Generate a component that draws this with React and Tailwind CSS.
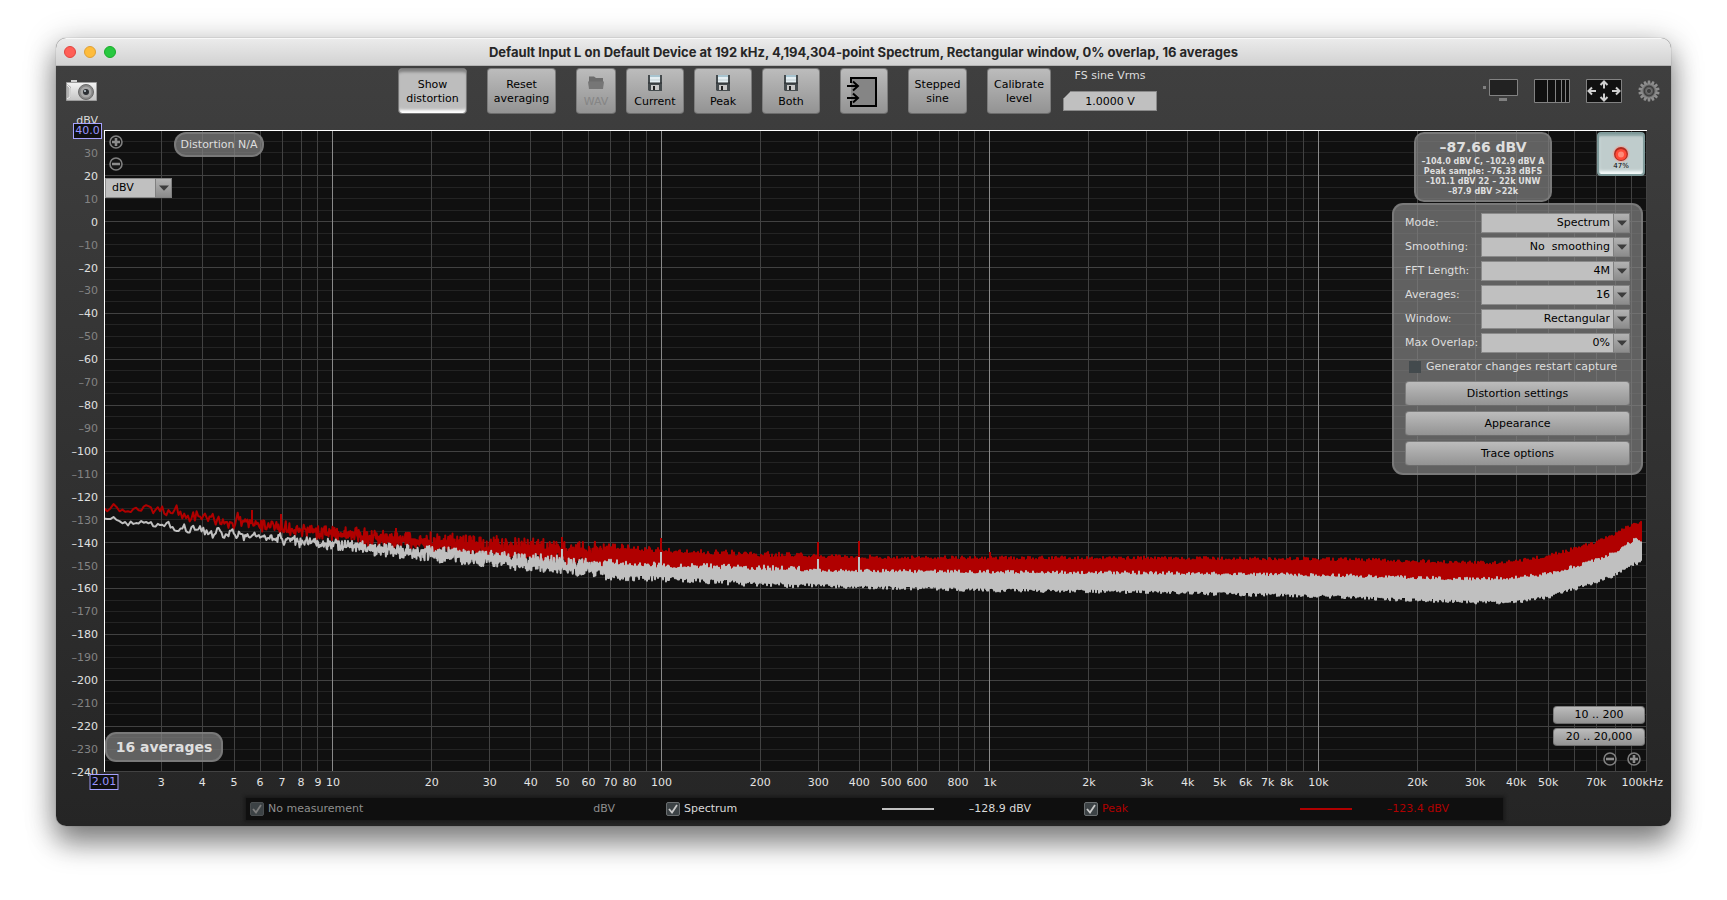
import React from "react";

const PLOT_W = 1543;
const PLOT_H = 642;
const F_MIN = 2.01;
const F_MAX = 100000;
const DECADES = Math.log10(F_MAX / F_MIN);

const xOf = (f) => (Math.log10(f / F_MIN) / DECADES) * PLOT_W;
const yOf = (db) => ((40 - db) / 280) * PLOT_H;

// Envelope rows: x, peak top, peak bottom, spectrum top, spectrum bottom
const ENVELOPE = [
  [0, 372, 382, 386, 390],
  [20, 373, 384, 388, 394],
  [55, 374, 386, 390, 398],
  [97, 381, 393, 397, 406],
  [160, 389, 402, 403, 412],
  [228, 397, 410, 410, 419],
  [327, 406, 421, 418, 429],
  [425, 412, 430, 426, 438],
  [495, 417, 435, 433, 445],
  [556, 422, 441, 437, 447],
  [655, 426, 446, 440, 452],
  [754, 428, 451, 442, 456],
  [885, 429, 451, 443, 459],
  [1045, 429, 451, 444, 461],
  [1213, 430, 453, 446, 465],
  [1312, 432, 455, 449, 469],
  [1371, 434, 457, 450, 471],
  [1411, 433, 456, 449, 471],
  [1443, 427, 451, 445, 466],
  [1470, 420, 443, 438, 458],
  [1495, 412, 436, 430, 450],
  [1515, 403, 426, 421, 442],
  [1530, 394, 417, 411, 433],
  [1537, 393, 416, 411, 432],
];

function lerpEnvelope(x) {
  let i = 1;
  while (i < ENVELOPE.length - 1 && ENVELOPE[i][0] < x) i += 1;
  const a = ENVELOPE[i - 1];
  const b = ENVELOPE[i];
  const t = Math.min(1, Math.max(0, (x - a[0]) / (b[0] - a[0])));
  return a.map((v, k) => v + (b[k] - v) * t);
}

function makeRandom(seed) {
  let s = seed;
  return () => {
    s = (s * 1664525 + 1013904223) % 4294967296;
    return s / 4294967296;
  };
}

function makeTrace(seed, topIndex, spikes) {
  const rnd = makeRandom(seed);
  const pts = [];
  let x = 0;
  let smooth = 0;
  while (x <= 500) {
    const e = lerpEnvelope(x);
    const top = e[topIndex];
    const bottom = e[topIndex + 1];
    const f = F_MIN * Math.pow(10, (x / PLOT_W) * DECADES);
    const n = rnd() + rnd() - 1;
    const memory = Math.max(0, 0.4 - x / 600);
    smooth = smooth * memory + n;
    const gain = 0.65 + (x / 500) * 0.2;
    pts.push([x, (top + bottom) / 2 + smooth * (bottom - top) * gain]);
    x += Math.max(0.25, 6.5 / f);
  }
  for (x = Math.ceil(x); x <= 1537; x += 1) {
    const e = lerpEnvelope(x);
    const rough = x < 700 ? 6 : 4;
    pts.push([x, e[topIndex] + 1.5 - Math.pow(rnd(), 2) * rough]);
    pts.push([x, e[topIndex + 1] - 1.5 + Math.pow(rnd(), 2) * rough]);
  }
  const line = "M" + pts.map((p) => p[0].toFixed(1) + " " + p[1].toFixed(1)).join("L");
  const peaks = spikes
    .map(([sx, sy]) => {
      const e = lerpEnvelope(sx);
      return "M" + sx + " " + sy + "V" + ((e[topIndex] + e[topIndex + 1]) / 2).toFixed(1);
    })
    .join("");
  return line + peaks;
}

const PEAK_PATH = makeTrace(7, 1, [
  [148, 380], [177, 384], [292, 398], [458, 407], [557, 408], [714, 412], [755, 411], [886, 422],
]);
const SPECTRUM_PATH = makeTrace(41, 3, [[458, 419], [557, 422], [714, 429], [755, 427]]);

const MAJOR_FREQS = [10, 100, 1000, 10000];
const MINOR_FREQS = [];
for (let d = 1; d <= 10000; d *= 10) {
  for (let m = 2; m <= 9; m += 1) if (d * m > 2.1) MINOR_FREQS.push(d * m);
}
const LEVEL_LINES = [];
for (let db = 35; db >= -240; db -= 5) LEVEL_LINES.push(db);
const LEVEL_LABELS = [];
for (let db = 30; db >= -240; db -= 10) LEVEL_LABELS.push(db);
const FREQ_LABELS = [
  3, 4, 5, 6, 7, 8, 9, 10, 20, 30, 40, 50, 60, 70, 80, 100, 200, 300, 400, 500, 600, 800, 1000,
  2000, 3000, 4000, 5000, 6000, 7000, 8000, 10000, 20000, 30000, 40000, 50000, 70000,
];

const raised =
  "rounded border border-[#7c7c7c] border-b-[#6c6c6c] bg-linear-to-b from-[#bcbcbc] to-[#939393] text-black";

function ToolButton({ className, children, ...rest }) {
  return (
    <button
      type="button"
      className={`flex h-[46px] flex-col items-center justify-center pt-[2px] leading-[14px] ${raised} ${className}`}
      {...rest}
    >
      {children}
    </button>
  );
}

function Floppy() {
  return (
    <svg className="mb-1 h-4 w-4" viewBox="0 0 16 16" aria-hidden="true">
      <path d="M1 0h14v16H2l-1-1z" fill="#454b4e" />
      <path d="M3 0h10v8H3z" fill="#e4eef2" />
      <path d="M3 0h10v2H3z" fill="#a8c4d0" />
      <path d="M3 5h10" stroke="#c2ced2" />
      <path d="M4 10h8v5H4z" fill="#c8c8c8" />
      <path d="M6 11h2v4H6z" fill="#222" />
      <path d="M1 8h14" stroke="#2c3032" />
    </svg>
  );
}

function SelectBox({ id, value, label, className, align }) {
  return (
    <div className={`relative flex h-5 ${className}`}>
      <select
        id={id}
        aria-label={label}
        defaultValue={value}
        className={`h-5 w-full appearance-none border border-[#8a8a8a] bg-[#c0c0c0] pr-[19px] pl-[6px] leading-4 text-black ${align}`}
      >
        <option>{value}</option>
      </select>
      <span className="pointer-events-none absolute inset-y-0 right-0 flex w-[17px] items-center justify-center border border-[#808080] bg-linear-to-b from-[#b2b2b2] to-[#8c8c8c]">
        <svg className="h-[6px] w-[10px]" viewBox="0 0 10 6" aria-hidden="true">
          <path d="M0 0.5h10L5 5.8z" fill="#3c3c3c" />
        </svg>
      </span>
    </div>
  );
}

function ZoomButton({ plus, label }) {
  return (
    <button type="button" aria-label={label} className="h-4 w-4 rounded-full">
      <svg className="h-4 w-4" viewBox="0 0 16 16" aria-hidden="true">
        <circle cx="8" cy="8" r="6" fill="#151515" stroke="#808080" strokeWidth="1.6" />
        <path d={plus ? "M4 8h8M8 4v8" : "M4 8h8"} stroke="#8c8c8c" strokeWidth="2.6" />
      </svg>
    </button>
  );
}

function LegendCheck({ id, label, color, dim }) {
  return (
    <div className="flex w-[216px] items-center gap-1">
      <span className="relative flex h-[14px] w-[14px]">
        <input
          id={id}
          type="checkbox"
          defaultChecked
          disabled={dim}
          className="peer h-[14px] w-[14px] appearance-none rounded-xs border border-[#6a6e70] bg-[#3c4245] disabled:border-[#4a4e50]"
        />
        <svg
          className="pointer-events-none absolute inset-0 hidden h-[14px] w-[14px] peer-checked:block"
          viewBox="0 0 14 14"
          aria-hidden="true"
        >
          <path d="M3 7l3 3.5L11 3" fill="none" stroke={dim ? "#7c7c7c" : "#c8c8c8"} strokeWidth="1.8" />
        </svg>
      </span>
      <label htmlFor={id} className={color}>
        {label}
      </label>
    </div>
  );
}

const SETTINGS = [
  ["mode", "Mode:", "Spectrum"],
  ["smoothing", "Smoothing:", "No\u00a0 smoothing"],
  ["fft", "FFT Length:", "4M"],
  ["averages", "Averages:", "16"],
  ["window", "Window:", "Rectangular"],
  ["overlap", "Max Overlap:", "0%"],
];

const glass = "border-2 border-[#808080]/80 bg-[#858585]/70 text-[#dedede]";

function Gear() {
  const teeth = Array.from({ length: 14 }, (_, i) => i * (360 / 14));
  return (
    <svg className="h-[22px] w-[22px]" viewBox="0 0 22 22" aria-hidden="true">
      {teeth.map((a) => (
        <path key={a} d="M9.9 0.4h2.2l.5 3.6h-3.2z" fill="#8e8e8e" transform={`rotate(${a} 11 11)`} />
      ))}
      <circle cx="11" cy="11" r="7" fill="#6a6a6a" stroke="#8a8a8a" strokeWidth="1.2" />
      <circle cx="11" cy="11" r="4.8" fill="#5c5c5c" stroke="#3c3c3c" strokeWidth="1.2" />
      <circle cx="11" cy="11" r="2.6" fill="#3d3d3d" stroke="#7c7c7c" strokeWidth="0.8" />
    </svg>
  );
}

function Toolbar() {
  return (
    <div className="flex h-16 items-start justify-between pt-[2px] pr-[11px] pl-[10px]">
      <button type="button" aria-label="Capture image" className="mt-3 h-[21px] w-[31px]">
        <svg className="h-[21px] w-[31px]" viewBox="0 0 31 21" aria-hidden="true">
          <defs>
            <linearGradient id="cam" x1="0" y1="0" x2="0" y2="1">
              <stop offset="0" stopColor="#f4f4f4" />
              <stop offset="1" stopColor="#c4c4c4" />
            </linearGradient>
          </defs>
          <path d="M5 0h6v3H5z" fill="#d2d2d2" />
          <path d="M0.5 2.5h30v18h-30z" fill="url(#cam)" stroke="#9c9c9c" />
          <path d="M1 4l4 3v10l-4 3z" fill="#b2b2b2" />
          <path d="M1 5l3 3v9l-3 2" fill="none" stroke="#eee" />
          <circle cx="20" cy="12" r="7.5" fill="#888" stroke="#6b6b6b" />
          <circle cx="20" cy="12" r="5.5" fill="#a8a8a8" />
          <circle cx="20" cy="12" r="3" fill="#2c3034" />
          <circle cx="19" cy="11" r="1" fill="#c8d4dc" />
        </svg>
      </button>

      <div className="flex items-start">
        <button
          type="button"
          aria-pressed="true"
          className="h-[46px] w-[69px] rounded border border-[#767676] bg-[#bdbdbd] pt-[2px] leading-[14px] text-black shadow-[inset_0_3px_3px_#808080,inset_0_-3px_3px_#fff]"
        >
          Show
          <br />
          distortion
        </button>
        <ToolButton className="ml-5 w-[69px]">
          Reset
          <br />
          averaging
        </ToolButton>
        <ToolButton className="ml-5 w-10 !text-[#858585]" disabled>
          <svg className="mb-1 h-4 w-4" viewBox="0 0 16 16" aria-hidden="true">
            <path d="M1 1.5h5l2 1.5h7v5H1z" fill="#6c6c6c" />
            <path d="M0 6.5h16l-1 7.5H1z" fill="#767676" />
          </svg>
          WAV
        </ToolButton>
        <ToolButton className="ml-[10px] w-[58px]">
          <Floppy />
          Current
        </ToolButton>
        <ToolButton className="ml-[10px] w-[58px]">
          <Floppy />
          Peak
        </ToolButton>
        <ToolButton className="ml-[10px] w-[58px]">
          <Floppy />
          Both
        </ToolButton>
        <ToolButton className="ml-5 w-12" aria-label="Input settings">
          <svg className="-ml-1 h-[30px] w-[30px]" viewBox="0 0 30 30" aria-hidden="true">
            <path d="M4 1h25v28H4z" fill="#858585" />
            <path d="M4 6V1h25v28H4v-5" fill="none" stroke="#000" strokeWidth="2" />
            <path
              d="M0 9h11M0 21h11M6 4.500l5 4.500-5 4.500M6 16.500l5 4.500-5 4.500"
              fill="none"
              stroke="#000"
              strokeWidth="2"
            />
          </svg>
        </ToolButton>
        <ToolButton className="ml-5 w-[59px]">
          Stepped
          <br />
          sine
        </ToolButton>
        <ToolButton className="ml-5 w-16">
          Calibrate
          <br />
          level
        </ToolButton>
        <div className="ml-3 flex w-[94px] flex-col items-center gap-2 pt-px">
          <label htmlFor="vrms" className="leading-[14px] whitespace-nowrap text-[#dcdcdc]">
            FS sine Vrms
          </label>
          <input
            id="vrms"
            defaultValue="1.0000 V"
            className="h-5 w-full border border-[#8a8a8a] bg-[#c0c0c0] text-center text-black [clip-path:polygon(8px_0,100%_0,100%_100%,0_100%,0_8px)]"
          />
        </div>
      </div>

      <div className="mt-[11px] flex items-start gap-4 pl-6">
        <button type="button" aria-label="Display" className="h-6 w-9">
          <svg className="h-6 w-9" viewBox="0 0 36 24" aria-hidden="true">
            <path d="M7.500 0.500h28v16h-28z" fill="#222" stroke="#828282" />
            <path d="M1 7h3v3H1zM17 19h8v3h-8z" fill="#808080" />
          </svg>
        </button>
        <button type="button" aria-label="Frequency axis" className="h-6 w-9">
          <svg className="h-6 w-9" viewBox="0 0 36 24" aria-hidden="true">
            <path d="M0.500 0.500h35v23h-35z" fill="#101010" stroke="#828282" />
            <path d="M13.500 1v22M21.500 1v22M27.500 1v22M31.500 1v22" stroke="#828282" />
          </svg>
        </button>
        <button type="button" aria-label="Fit graph" className="h-6 w-9">
          <svg className="h-6 w-9" viewBox="0 0 36 24" aria-hidden="true">
            <path d="M0.500 0.500h35v23h-35z" fill="#101010" stroke="#828282" />
            <path
              d="M18 9.500V3M14.500 6L18 2.500 21.500 6M18 14.500V21M14.500 18l3.500 3.500 3.500-3.500M10 12H3M6 8.500L2.500 12 6 15.500M26 12h7M30 8.500l3.500 3.500-3.500 3.500"
              fill="none"
              stroke="#d0d0d0"
              strokeWidth="2"
            />
          </svg>
        </button>
        <button type="button" aria-label="Settings" className="h-6 w-[22px]">
          <Gear />
        </button>
      </div>
    </div>
  );
}

function Plot() {
  return (
    <div className="relative min-w-0 flex-1">
      <div className="relative h-[642px] bg-[#101010]">
        <svg
          className="block h-full w-full"
          viewBox={`0 0 ${PLOT_W} ${PLOT_H}`}
          preserveAspectRatio="none"
          role="img"
          aria-label="Spectrum and peak level against frequency"
        >
          <g shapeRendering="crispEdges" strokeWidth="1">
            {LEVEL_LINES.filter((db) => db % 20 !== 0).map((db) => (
              <line key={db} x1="0" x2={PLOT_W} y1={yOf(db)} y2={yOf(db)} stroke="#242424" />
            ))}
            {MINOR_FREQS.map((f) => (
              <line key={f} x1={xOf(f)} x2={xOf(f)} y1="0" y2={PLOT_H} stroke="#424242" />
            ))}
            {LEVEL_LINES.filter((db) => db % 20 === 0).map((db) => (
              <line key={db} x1="0" x2={PLOT_W} y1={yOf(db)} y2={yOf(db)} stroke="#424242" />
            ))}
            {MAJOR_FREQS.map((f) => (
              <line key={f} x1={xOf(f)} x2={xOf(f)} y1="0" y2={PLOT_H} stroke="#8a8a8a" />
            ))}
            <line x1={PLOT_W - 1} x2={PLOT_W - 1} y1="0" y2={PLOT_H} stroke="#424242" />
            <line x1="0" x2={PLOT_W} y1={PLOT_H - 1} y2={PLOT_H - 1} stroke="#424242" />
          </g>
          <path d={PEAK_PATH} fill="none" stroke="#b00000" strokeWidth="2" strokeLinejoin="round" />
          <path d={SPECTRUM_PATH} fill="none" stroke="#c0c0c0" strokeWidth="2" strokeLinejoin="round" />
          <path d={`M0.500 ${PLOT_H}V0.500H${PLOT_W}`} fill="none" stroke="#fff" shapeRendering="crispEdges" />
        </svg>

        <div className="absolute top-1 left-px flex flex-col gap-[6px]">
          <div className="flex flex-col gap-[6px] pl-[3px]">
            <ZoomButton plus label="Zoom in level axis" />
            <ZoomButton label="Zoom out level axis" />
          </div>
          <SelectBox label="Level units" value="dBV" className="w-[67px]" align="" />
        </div>

        <div className={`absolute top-[2px] left-[70px] flex h-[25px] w-[90px] items-center justify-center rounded-xl whitespace-nowrap ${glass}`}>
          Distortion N/A
        </div>

        <div className={`absolute bottom-[10px] left-px flex h-[30px] w-[118px] items-center justify-center rounded-[11px] text-[14px] font-bold ${glass}`}>
          16 averages
        </div>

        <div className={`absolute top-[2px] right-[95px] flex h-[70px] w-[138px] flex-col items-center rounded-[10px] pt-1 font-bold whitespace-nowrap ${glass}`}>
          <span className="text-[14px] leading-[18px]">–87.66 dBV</span>
          <div className="pt-px text-center text-[8px] leading-[10px]">
            <p>–104.0 dBV C, –102.9 dBV A</p>
            <p>Peak sample: –76.33 dBFS</p>
            <p>–101.1 dBV 22 – 22k UNW</p>
            <p>–87.9 dBV &gt;22k</p>
          </div>
        </div>

        <button
          type="button"
          aria-label="Stop recording"
          className="absolute top-[2px] right-[2px] flex h-11 w-12 flex-col items-center justify-end rounded border-2 border-[#7f9a9a] bg-[#bfcccc] pb-1 text-black shadow-[inset_0_2px_2px_#8ba3a3,inset_0_-3px_3px_#f4fafa]"
        >
          <svg className="h-[18px] w-[18px]" viewBox="0 0 18 18" aria-hidden="true">
            <circle cx="9" cy="9" r="8.500" fill="#e8a8a0" opacity="0.6" />
            <circle cx="9" cy="9" r="7" fill="#b02c20" />
            <circle cx="9" cy="9.500" r="5.600" fill="#ff4a38" />
            <circle cx="9" cy="9.500" r="3" fill="#ff8a78" />
          </svg>
          <span className="text-[7px] leading-[7px]">47%</span>
        </button>

        <form
          className={`absolute top-[73px] right-1 flex w-[251px] flex-col rounded-[11px] px-[11px] pt-2 pb-[7px] ${glass}`}
          onSubmit={(e) => e.preventDefault()}
        >
          <div className="flex flex-col gap-1">
            {SETTINGS.map(([id, label, value]) => (
              <div key={id} className="flex items-center justify-between">
                <label htmlFor={id} className="whitespace-nowrap">
                  {label}
                </label>
                <SelectBox id={id} value={value} className="w-[149px]" align="[text-align-last:right]" />
              </div>
            ))}
          </div>
          <div className="mt-[6px] flex h-4 items-center gap-[5px] pl-1">
            <input id="restart" type="checkbox" className="h-3 w-3 appearance-none bg-[#434a4d]" />
            <label htmlFor="restart" className="whitespace-nowrap">
              Generator changes restart capture
            </label>
          </div>
          <div className="mt-[6px] flex flex-col gap-[5px]">
            <button type="button" className={`h-[25px] ${raised}`}>
              Distortion settings
            </button>
            <button type="button" className={`h-[25px] ${raised}`}>
              Appearance
            </button>
            <button type="button" className={`h-[25px] ${raised}`}>
              Trace options
            </button>
          </div>
        </form>

        <div className="absolute right-[2px] bottom-[5px] flex w-[92px] flex-col gap-1">
          <button type="button" className={`h-[18px] leading-4 ${raised}`}>
            10 .. 200
          </button>
          <button type="button" className={`h-[18px] leading-4 ${raised}`}>
            20 .. 20,000
          </button>
          <div className="flex justify-end gap-2 pt-px pr-[3px]">
            <ZoomButton label="Zoom out frequency axis" />
            <ZoomButton plus label="Zoom in frequency axis" />
          </div>
        </div>
      </div>

      <div className="relative h-[26px] text-[#e4e4e4]">
        {FREQ_LABELS.map((f) => (
          <span
            key={f}
            className="absolute top-1 -translate-x-1/2 leading-[14px]"
            style={{ left: `${(xOf(f) / PLOT_W) * 100}%` }}
          >
            {f >= 1000 ? `${f / 1000}k` : f}
          </span>
        ))}
        <span className="absolute top-1 -right-4 leading-[14px]">100kHz</span>
        <span className="absolute top-[2px] left-0 flex h-4 w-[29px] -translate-x-1/2 items-center justify-center border border-[#a6a2ff] bg-[#101010] text-[#9a94ff]">
          2.01
        </span>
      </div>
    </div>
  );
}

function LevelAxis() {
  return (
    <div className="relative w-12 shrink-0">
      <span className="absolute -top-4 right-[6px] leading-[14px] text-[#dcdcdc]">dBV</span>
      <div className="relative -mt-2 flex h-[660px] flex-col items-end justify-between pr-[6px]">
        <span className="-mr-1 flex h-[18px] items-center">
          <span className="flex h-4 w-[29px] items-center justify-center border border-[#a6a2ff] bg-[#101010] text-[#9a94ff]">
            40.0
          </span>
        </span>
        {LEVEL_LABELS.map((db) => (
          <span
            key={db}
            className={`h-[18px] leading-[18px] ${db % 20 === 0 ? "text-[#e0e0e0]" : "text-[#838383]"}`}
          >
            {db < 0 ? `–${-db}` : db}
          </span>
        ))}
      </div>
    </div>
  );
}

function Legend() {
  return (
    <div className="mr-[168px] ml-[190px] grid h-[22px] grid-cols-3 bg-[#0f0f0f] shadow-[0_0_3px_2px_#1a1a1a]">
      <div className="flex items-center pl-1">
        <LegendCheck id="no-measurement" label="No measurement" color="text-[#8e8e8e]" dim />
        <span className="w-[149px] text-right text-[#8e8e8e]">dBV</span>
      </div>
      <div className="flex items-center pl-px">
        <LegendCheck id="spectrum" label="Spectrum" color="text-[#dadada]" />
        <span className="h-[2px] w-[52px] bg-[#c0c0c0]" />
        <span className="w-[97px] text-right text-[#dadada]">–128.9 dBV</span>
      </div>
      <div className="flex items-center">
        <LegendCheck id="peak" label="Peak" color="text-[#b00000]" />
        <span className="h-[2px] w-[52px] bg-[#b00000]" />
        <span className="w-[97px] text-right text-[#b00000]">–123.4 dBV</span>
      </div>
    </div>
  );
}

export default function App() {
  return (
    <div className="min-h-screen bg-white px-14 pt-[38px] pb-[74px] font-['DejaVu_Sans','Liberation_Sans',sans-serif] text-[11px] leading-4">
      <main className="flex flex-col overflow-hidden rounded-[10px] bg-linear-to-b from-[#404040] to-[#252525] shadow-[0_0_1px_#0008,0_18px_28px_#0006,0_4px_32px_#0004]">
        <header className="relative flex h-7 items-center justify-center border-t border-b border-t-[#f8f8f8] border-b-[#b4b4b4] bg-linear-to-b from-[#ebebeb] to-[#d2d2d2]">
          <div className="absolute left-2 flex gap-2">
            <button type="button" aria-label="Close" className="h-3 w-3 rounded-full border border-[#e0443e] bg-[#ff5f57]" />
            <button type="button" aria-label="Minimize" className="h-3 w-3 rounded-full border border-[#dea035] bg-[#febc3c]" />
            <button type="button" aria-label="Zoom" className="h-3 w-3 rounded-full border border-[#1aab29] bg-[#28c840]" />
          </div>
          <h1 className="font-[Inter,sans-serif] text-[13px] font-bold text-[#262626]">
            Default Input L on Default Device at 192 kHz, 4,194,304-point Spectrum, Rectangular window, 0% overlap, 16 averages
          </h1>
        </header>
        <Toolbar />
        <div className="flex pr-6">
          <LevelAxis />
          <Plot />
        </div>
        <Legend />
        <div className="h-[6px]" />
      </main>
    </div>
  );
}
